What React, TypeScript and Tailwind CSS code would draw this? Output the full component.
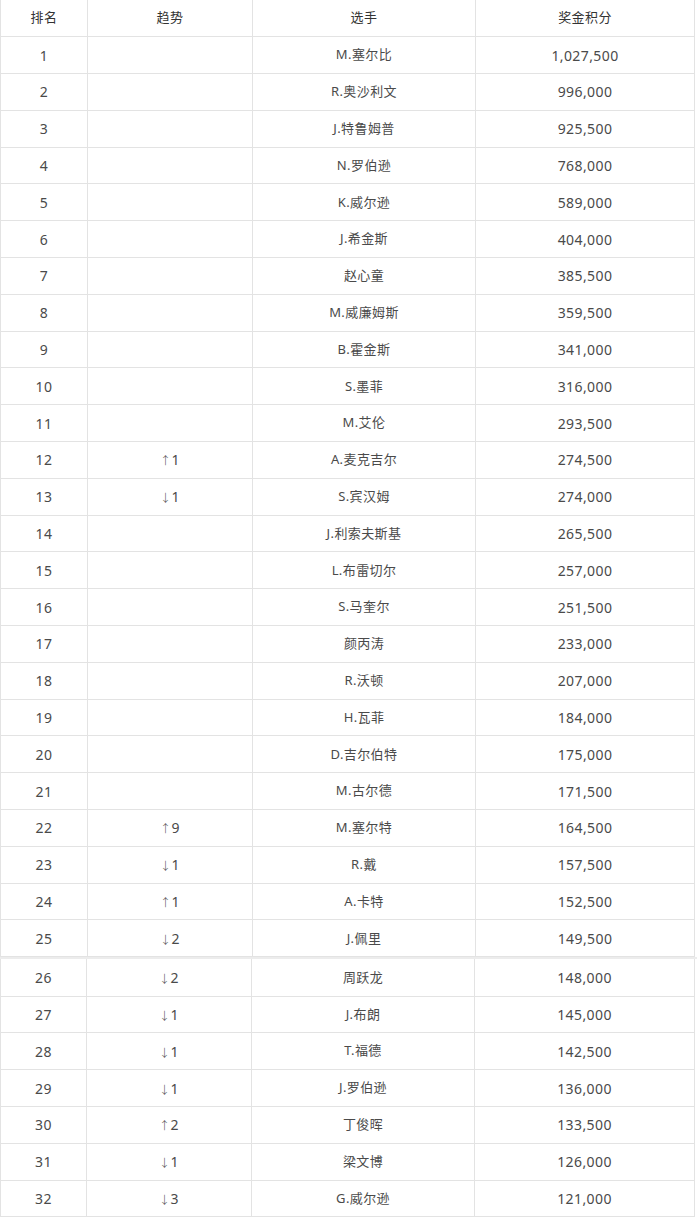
import React from "react";

type Row = { rank: number; trend: string; name: string; points: string };

const top: Row[] = [
  { rank: 1, trend: "", name: "M.塞尔比", points: "1,027,500" },
  { rank: 2, trend: "", name: "R.奥沙利文", points: "996,000" },
  { rank: 3, trend: "", name: "J.特鲁姆普", points: "925,500" },
  { rank: 4, trend: "", name: "N.罗伯逊", points: "768,000" },
  { rank: 5, trend: "", name: "K.威尔逊", points: "589,000" },
  { rank: 6, trend: "", name: "J.希金斯", points: "404,000" },
  { rank: 7, trend: "", name: "赵心童", points: "385,500" },
  { rank: 8, trend: "", name: "M.威廉姆斯", points: "359,500" },
  { rank: 9, trend: "", name: "B.霍金斯", points: "341,000" },
  { rank: 10, trend: "", name: "S.墨菲", points: "316,000" },
  { rank: 11, trend: "", name: "M.艾伦", points: "293,500" },
  { rank: 12, trend: "↑1", name: "A.麦克吉尔", points: "274,500" },
  { rank: 13, trend: "↓1", name: "S.宾汉姆", points: "274,000" },
  { rank: 14, trend: "", name: "J.利索夫斯基", points: "265,500" },
  { rank: 15, trend: "", name: "L.布雷切尔", points: "257,000" },
  { rank: 16, trend: "", name: "S.马奎尔", points: "251,500" },
  { rank: 17, trend: "", name: "颜丙涛", points: "233,000" },
  { rank: 18, trend: "", name: "R.沃顿", points: "207,000" },
  { rank: 19, trend: "", name: "H.瓦菲", points: "184,000" },
  { rank: 20, trend: "", name: "D.吉尔伯特", points: "175,000" },
  { rank: 21, trend: "", name: "M.古尔德", points: "171,500" },
  { rank: 22, trend: "↑9", name: "M.塞尔特", points: "164,500" },
  { rank: 23, trend: "↓1", name: "R.戴", points: "157,500" },
  { rank: 24, trend: "↑1", name: "A.卡特", points: "152,500" },
  { rank: 25, trend: "↓2", name: "J.佩里", points: "149,500" },
];

const bottom: Row[] = [
  { rank: 26, trend: "↓2", name: "周跃龙", points: "148,000" },
  { rank: 27, trend: "↓1", name: "J.布朗", points: "145,000" },
  { rank: 28, trend: "↓1", name: "T.福德", points: "142,500" },
  { rank: 29, trend: "↓1", name: "J.罗伯逊", points: "136,000" },
  { rank: 30, trend: "↑2", name: "丁俊晖", points: "133,500" },
  { rank: 31, trend: "↓1", name: "梁文博", points: "126,000" },
  { rank: 32, trend: "↓3", name: "G.威尔逊", points: "121,000" },
];

const cell = "border-r border-b border-[#e3e3e3] text-center align-middle";

function Trend({ value }: { value: string }) {
  if (!value) return null;
  return (
    <span>
      <span className="text-[11px] font-light">{value[0]}</span>
      {value.slice(1)}
    </span>
  );
}

function Rows({ rows }: { rows: Row[] }) {
  return (
    <>
      {rows.map((r) => (
        <tr key={r.rank} className="h-[36.8px]">
          <td className={cell + " border-l"}>{r.rank}</td>
          <td className={cell}>
            <Trend value={r.trend} />
          </td>
          <td className={cell + " text-[13px]"}>{r.name}</td>
          <td className={cell}>{r.points}</td>
        </tr>
      ))}
    </>
  );
}

export default function App() {
  return (
    <div
      className="w-[697px] bg-white text-[#4a4a4a] text-[14px] tracking-[0.4px]"
      style={{ fontFamily: '"Noto Sans", "Noto Sans CJK SC", sans-serif' }}
    >
      <table className="w-[695px] table-fixed border-collapse">
        <colgroup>
          <col className="w-[87px]" />
          <col className="w-[165px]" />
          <col className="w-[223px]" />
          <col />
        </colgroup>
        <thead>
          <tr className="h-[36.8px] text-[13px]">
            <th className={cell + " border-l font-normal text-[#333]"}>排名</th>
            <th className={cell + " font-normal text-[#333]"}>趋势</th>
            <th className={cell + " font-normal text-[#333]"}>选手</th>
            <th className={cell + " font-normal text-[#333]"}>奖金积分</th>
          </tr>
        </thead>
        <tbody>
          <Rows rows={top} />
        </tbody>
      </table>

      <div className="h-[2px] bg-[#ececec]" />

      <table className="w-[695px] table-fixed border-collapse">
        <colgroup>
          <col className="w-[86px]" />
          <col className="w-[165px]" />
          <col className="w-[223px]" />
          <col />
        </colgroup>
        <tbody>
          <Rows rows={bottom} />
        </tbody>
      </table>
    </div>
  );
}
